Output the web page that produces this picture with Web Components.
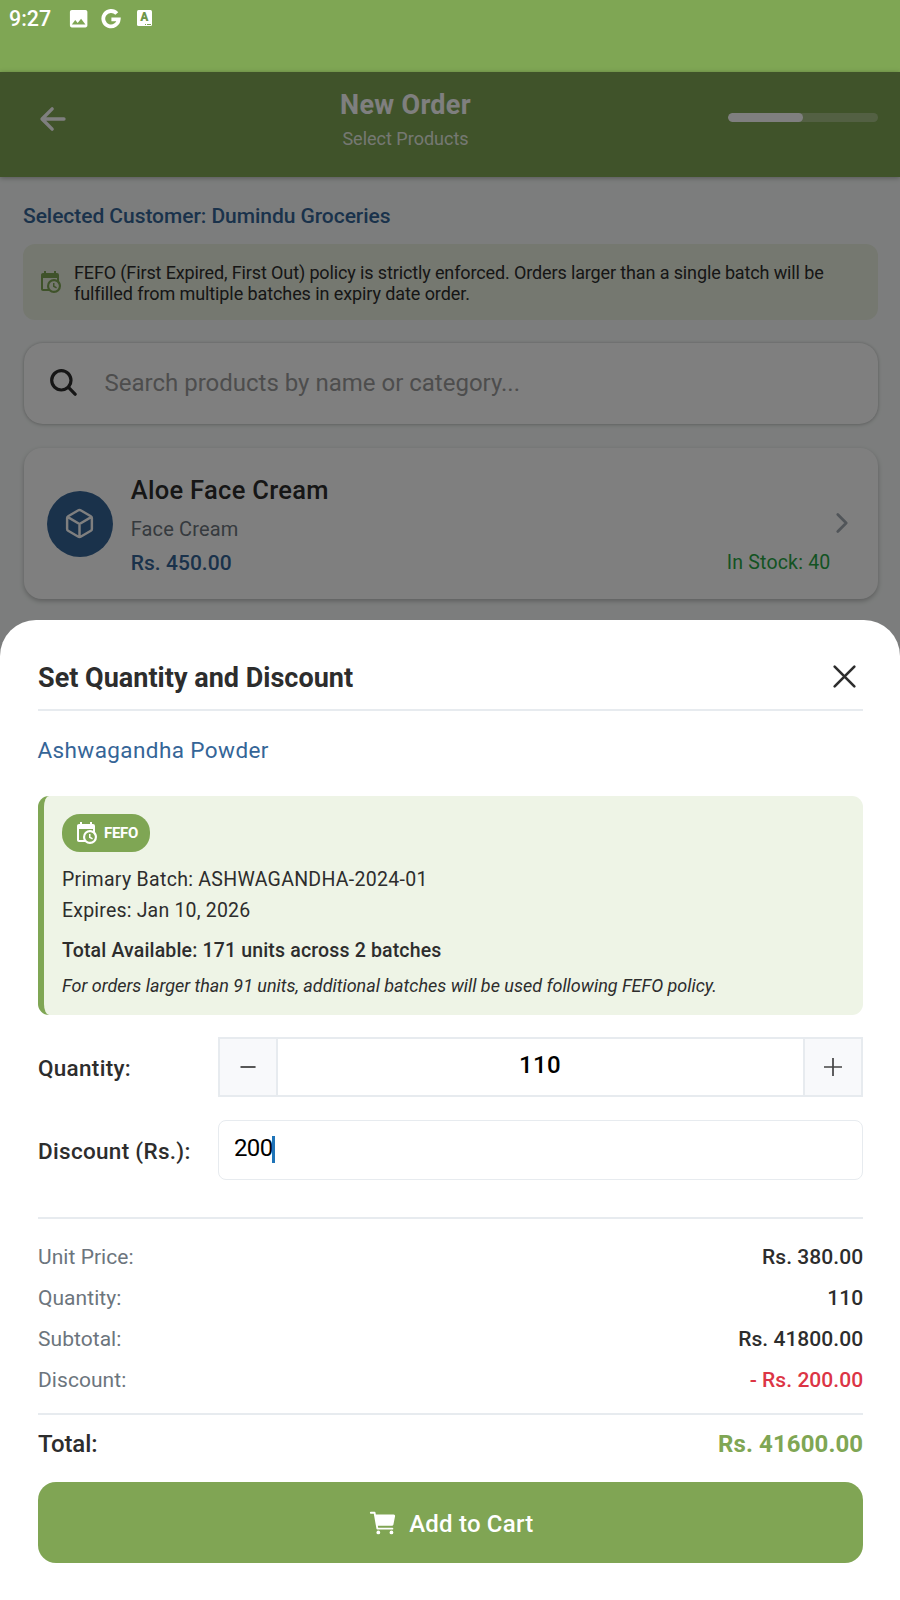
<!DOCTYPE html>
<html lang="en">
<head>
<meta charset="utf-8">
<title>New Order</title>
<style>
html, body { margin: 0; }
body { font-family: Roboto, "Noto Sans", sans-serif; color: #2d2d2d; background: #fff; }
</style>
</head>
<body>
<order-screen></order-screen>
<script>
const define = (name, css, html) => customElements.define(name, class extends HTMLElement {
  connectedCallback() {
    if (this.shadowRoot) return;
    const root = this.attachShadow({ mode: 'open' });
    const get = (_, k) => this.getAttribute(k) || '';
    root.innerHTML = '<style>:host{display:block;box-sizing:border-box}*{box-sizing:border-box}' + css + '</style>' + html.replace(/\{(\w+)\}/g, get);
  }
});

const ICONS = {
  image: ['0 0 24 24', '<path fill="currentColor" d="M21 19V5c0-1.1-.9-2-2-2H5c-1.1 0-2 .9-2 2v14c0 1.1.9 2 2 2h14c1.1 0 2-.9 2-2zM8.5 13.5l2.5 3.01L14.5 12l4.5 6H5l3.5-4.5z"/>'],
  google: ['0 0 20 20', '<path fill="none" stroke="currentColor" stroke-width="3.8" d="M15.8 4.6A7.7 7.7 0 1 0 17.7 10.4H10.4"/>'],
  back: ['0 0 512 512', '<path fill="none" stroke="currentColor" stroke-width="48" stroke-linecap="round" stroke-linejoin="round" d="M244 400L100 256l144-144M120 256h292"/>'],
  calendar: ['0 0 24 24', '<path fill="currentColor" d="M15,13H16.5V15.82L18.94,17.23L18.19,18.53L15,16.69V13M19,8H5V19H9.67C9.24,18.09 9,17.07 9,16A7,7 0 0,1 16,9C17.07,9 18.09,9.24 19,9.67V8M5,21C3.89,21 3,20.1 3,19V5C3,3.89 3.89,3 5,3H6V1H8V3H16V1H18V3H19A2,2 0 0,1 21,5V11.1C22.24,12.36 23,14.09 23,16A7,7 0 0,1 16,23C14.09,23 12.36,22.24 11.1,21H5M16,11.15A4.85,4.85 0 0,0 11.15,16C11.15,18.68 13.32,20.85 16,20.85A4.85,4.85 0 0,0 20.85,16C20.85,13.32 18.68,11.15 16,11.15Z"/>'],
  search: ['0 0 512 512', '<path fill="currentColor" d="M456.69 421.39L362.6 327.3a173.81 173.81 0 0034.84-104.58C397.44 126.38 319.06 48 222.72 48S48 126.38 48 222.72s78.38 174.72 174.72 174.72A173.81 173.81 0 00327.3 362.6l94.09 94.09a25 25 0 0035.3-35.3zM97.92 222.72a124.8 124.8 0 11124.8 124.8 124.95 124.95 0 01-124.8-124.8z"/>'],
  cube: ['0 0 512 512', '<path fill="none" stroke="currentColor" stroke-width="38" stroke-linecap="round" stroke-linejoin="round" d="M448 341.37V170.61A32 32 0 00432.11 143l-152-88.46a47.94 47.94 0 00-48.24 0L79.89 143A32 32 0 0064 170.61v170.76A32 32 0 0079.89 369l152 88.46a48 48 0 0048.24 0l152-88.46A32 32 0 00448 341.37zM69 154l187 110 187-110M256 464V264"/>'],
  chevron: ['0 0 512 512', '<path fill="none" stroke="currentColor" stroke-width="48" stroke-linecap="round" stroke-linejoin="round" d="M184 112l144 144-144 144"/>'],
  close: ['0 0 512 512', '<path fill="none" stroke="currentColor" stroke-width="30" stroke-linecap="round" d="M368 368L144 144M368 144L144 368"/>'],
  minus: ['0 0 18 18', '<path fill="none" stroke="currentColor" stroke-width="1.8" d="M1.5 9h15"/>'],
  plus: ['0 0 18 18', '<path fill="none" stroke="currentColor" stroke-width="1.7" d="M0 9h18M9 0v18"/>'],
  cart: ['0 0 512 512', '<g fill="currentColor"><circle cx="176" cy="416" r="32"/><circle cx="400" cy="416" r="32"/><path d="M456.8 120.78a23.92 23.92 0 00-18.56-8.78H133.89l-6.13-34.78A16 16 0 00112 64H48a16 16 0 000 32h50.58l45.66 258.78A16 16 0 00160 368h256a16 16 0 000-32H173.42l-5.64-32h241.66A24.07 24.07 0 00433 284.71l28.8-144a24 24 0 00-5-19.93z"/></g>']
};
customElements.define('app-icon', class extends HTMLElement {
  connectedCallback() {
    if (this.shadowRoot) return;
    const [box, shape] = ICONS[this.getAttribute('name')];
    const s = this.getAttribute('size');
    this.attachShadow({ mode: 'open' }).innerHTML = `<style>:host{display:block;flex:none}svg{display:block}</style><svg width="${s}" height="${s}" viewBox="${box}">${shape}</svg>`;
  }
});

define('status-bar', `
  :host{height:72px;background:#7fa654;color:#fff;display:flex;align-items:flex-start;padding:0 0 0 9px}
  .time{font-weight:500;font-size:21.4px;line-height:24px;margin-top:7px;width:57.5px}
  app-icon{margin-right:11.5px}
  .im{margin-top:7px}.g{margin:8.5px 15.5px 0 0}
  .a{width:15px;height:16px;margin-top:10px;background:#fff;color:#6f9548;border-radius:1.5px;font-weight:900;font-size:12px;line-height:15px;text-align:center;position:relative}
  .a::after{content:"";position:absolute;right:1px;bottom:1px;width:6px;height:1.5px;background:repeating-linear-gradient(90deg,#7fa654 0 1.5px,#fff 1.5px 2.2px)}
`, `<span class="time">9:27</span><app-icon class="im" name="image" size="23.3"></app-icon><app-icon class="g" name="google" size="20"></app-icon><span class="a">A</span>`);

define('order-header', `
  :host{height:105px;background:#80a654;color:#fff;display:flex;align-items:flex-start;padding:0 22px 0 34.5px;box-shadow:0 1px 5px rgba(0,0,0,.3);position:relative}
  app-icon{margin-top:29px}
  .t{flex:1;display:flex;flex-direction:column;align-items:center;padding-left:12.5px}
  .t b{font-size:27px;line-height:32px;letter-spacing:.3px;margin-top:17px}
  .t span{font-size:18px;line-height:22px;margin-top:7px;color:rgba(255,255,255,.86)}
  .bar{width:150px;height:9px;border-radius:5px;background:rgba(255,255,255,.3);margin-top:41px;overflow:hidden}
  .bar i{display:block;width:50%;height:9px;border-radius:5px;background:#fff}
`, `<app-icon name="back" size="36"></app-icon><div class="t"><b>New Order</b><span>Select Products</span></div><div class="bar"><i></i></div>`);

define('policy-banner', `
  :host{display:flex;height:76px;border-radius:12px;background:#eaf0e0;padding:18px 15px 0 15px;color:#2d2d2d}
  app-icon{color:#7fa654;margin:8px 12px 0 0}
  p{margin:0;font-size:18px;line-height:21px;letter-spacing:-.128px;white-space:nowrap}
  ::slotted(span){letter-spacing:-.09px}
`, `<app-icon name="calendar" size="24"></app-icon><p><slot></slot></p>`);

define('search-field', `
  :host{display:flex;height:81.5px;border-radius:19px;background:#fff;box-shadow:0 0 3px rgba(0,0,0,.16),0 1px 4px rgba(0,0,0,.16);padding:0 23px}
  app-icon{color:#2d2d2d;margin-top:23px}
  span{margin-left:25px;font-size:24px;line-height:30px;letter-spacing:0;margin-top:25px;color:#9b9b9b}
`, `<app-icon name="search" size="33"></app-icon><span><slot></slot></span>`);

define('product-card', `
  :host{display:flex;height:151px;border-radius:18px;background:#fff;box-shadow:0 2px 5px rgba(0,0,0,.26);padding:0 21px 0 23.4px}
  .ic{width:66px;height:66px;border-radius:50%;background:#356597;color:#fff;display:grid;place-items:center;margin-top:42.5px}
  .b{flex:1;margin-left:17.8px}
  .n{font-size:25.5px;font-weight:500;letter-spacing:.3px;line-height:30px;margin-top:26.5px}
  .c{font-size:20px;letter-spacing:.15px;line-height:24px;margin-top:12px;color:#6c757d}
  .f{display:flex;justify-content:space-between;margin-top:9px;line-height:26px}
  .p{font-size:21px;font-weight:500;letter-spacing:.04px;color:#356597}
  .s{font-size:19.5px;letter-spacing:.2px;color:#28a745;margin-right:-3.5px}
  .ch{color:#a3abb3;margin-top:59.5px}
`, `<div class="ic"><app-icon name="cube" size="33"></app-icon></div><div class="b"><div class="n">{name}</div><div class="c">{category}</div><div class="f"><span class="p">{price}</span><span class="s">{stock}</span></div></div><app-icon class="ch" name="chevron" size="30"></app-icon>`);

define('sheet-header', `
  :host{display:flex;justify-content:space-between;height:91px;border-bottom:2px solid #e7ebef}
  h2{margin:42px 0 0;font-size:27px;line-height:32px;font-weight:700;letter-spacing:.01px}
  app-icon{margin:33.5px -4.4px 0 0}
`, `<h2><slot></slot></h2><app-icon name="close" size="45"></app-icon>`);

define('batch-panel', `
  :host{display:block;height:219px;background:#eef4e6;border-left:6px solid #7fa654;border-radius:11px;padding:18px 0 0 18px;white-space:nowrap}
  .bd{display:inline-flex;width:88px;height:38px;border-radius:18px;background:#7fa654;color:#fff;padding:7px 0 0 12px;vertical-align:top}
  .bd b{font-size:15px;line-height:20px;letter-spacing:-.3px;margin:2px 0 0 6px}
  div{font-size:19.5px;line-height:24px}
  .p{margin-top:16px;letter-spacing:.3px}.e{margin-top:7px;letter-spacing:.2px}
  .t{margin-top:15.5px;font-weight:500;letter-spacing:.16px}
  .n{margin-top:11px;font-size:18px;letter-spacing:-.015px;font-style:italic}
`, `<span class="bd"><app-icon name="calendar" size="24"></app-icon><b>FEFO</b></span><div class="p">{batch}</div><div class="e">{expires}</div><div class="t">{total}</div><div class="n">{note}</div>`);

define('form-row', `
  :host{display:flex;height:60px}
  label{width:180px;font-size:22.5px;font-weight:500;letter-spacing:.3px;line-height:28px;margin-top:17px}
  ::slotted(*){flex:1}
`, `<label>{label}</label><slot></slot>`);

define('quantity-stepper', `
  :host{display:flex;height:60px;border:2px solid #e7ebef}
  .k{width:56px;background:#f8f9fb;display:grid;place-items:center;color:#444}
  .v{flex:1;border:solid #e7ebef;border-width:0 2px;width:0;text-align:center;color:#000;font-size:24px;font-weight:500;letter-spacing:.3px;line-height:28px;padding:12px 1px 0 0;height:56px}
`, `<div class="k"><app-icon name="minus" size="18"></app-icon></div><div class="v">{value}</div><div class="k"><app-icon name="plus" size="18"></app-icon></div>`);

define('money-input', `
  :host{display:flex;height:60px;border:1.5px solid #e7ebef;border-radius:8px;padding:0 15px;color:#000}
  span{font-size:24px;line-height:28px;margin-top:13px;letter-spacing:-.65px}
  i{width:3px;height:27px;background:#1f74b8;margin:15px 0 0 -.8px}
`, `<span>{value}</span><i></i>`);

define('summary-row', `
  :host{display:flex;justify-content:space-between;height:41px;font-size:21px;line-height:26px;letter-spacing:.05px}
  .l{color:#6c757d}.v{font-weight:500;margin-right:-.2px}
  :host([tone=red]) .v{color:#dc3545}
  :host([tone=total]){font-size:24px;line-height:30px;letter-spacing:.1px}
  :host([tone=total]) .l{color:#2d2d2d;font-weight:500;letter-spacing:-.1px}
  :host([tone=total]) .v{color:#7fa654;font-weight:700}
`, `<span class="l">{label}</span><span class="v">{value}</span>`);

define('cart-button', `
  :host{display:flex;justify-content:center;height:81px;border-radius:18px;background:#80a554;color:#fff}
  app-icon{margin:25.5px 11.6px 0 0}
  span{font-size:24px;font-weight:500;letter-spacing:.2px;line-height:28px;margin-top:27.5px}
`, `<app-icon name="cart" size="30"></app-icon><span><slot></slot></span>`);

define('quantity-sheet', `
  :host{height:980px;background:#fff;border-radius:36px 36px 0 0;padding:0 37px 0 38px;color:#2d2d2d}
  .name{font-size:22.5px;letter-spacing:.41px;line-height:28px;color:#356597;margin:25px 0 0 -.6px;height:60px}
  .q{margin-top:22px}.d{margin-top:23px}
  hr{border:0;height:2px;background:#e7ebef;margin:37px 0 25px}
  hr.b{margin:5px 0 14px}
  cart-button{margin-top:12px}
`, `<sheet-header>Set Quantity and Discount</sheet-header>
  <div class="name">Ashwagandha Powder</div>
  <batch-panel batch="Primary Batch: ASHWAGANDHA-2024-01" expires="Expires: Jan 10, 2026" total="Total Available: 171 units across 2 batches" note="For orders larger than 91 units, additional batches will be used following FEFO policy."></batch-panel>
  <form-row class="q" label="Quantity:"><quantity-stepper value="110"></quantity-stepper></form-row>
  <form-row class="d" label="Discount (Rs.):"><money-input value="200"></money-input></form-row>
  <hr>
  <summary-row label="Unit Price:" value="Rs. 380.00"></summary-row>
  <summary-row label="Quantity:" value="110"></summary-row>
  <summary-row label="Subtotal:" value="Rs. 41800.00"></summary-row>
  <summary-row tone="red" label="Discount:" value="- Rs. 200.00"></summary-row>
  <hr class="b">
  <summary-row tone="total" label="Total:" value="Rs. 41600.00"></summary-row>
  <cart-button>Add to Cart</cart-button>`);

define('order-screen', `
  :host{width:900px;height:1600px;overflow:hidden;position:relative;background:#f8fbfa}
  .body{padding:0 22px 0 23px}
  .cust{font-size:21px;font-weight:500;letter-spacing:-.05px;line-height:26px;color:#356597;padding-top:26px;height:67px}
  search-field{margin:22.5px 0 0 .5px}product-card{margin:24px 0 0 .5px}
  .modal{position:absolute;inset:72px 0 0;background:rgba(0,0,0,.5);display:flex;flex-direction:column;justify-content:flex-end}
`, `<status-bar></status-bar><order-header></order-header>
  <div class="body"><div class="cust">Selected Customer: Dumindu Groceries</div>
  <policy-banner>FEFO (First Expired, First Out) policy is strictly enforced. Orders larger than a single batch will be<br><span>fulfilled from multiple batches in expiry date order.</span></policy-banner>
  <search-field>Search products by name or category...</search-field>
  <product-card name="Aloe Face Cream" category="Face Cream" price="Rs. 450.00" stock="In Stock: 40"></product-card></div>
  <div class="modal"><quantity-sheet></quantity-sheet></div>`);
</script>
</body>
</html>
